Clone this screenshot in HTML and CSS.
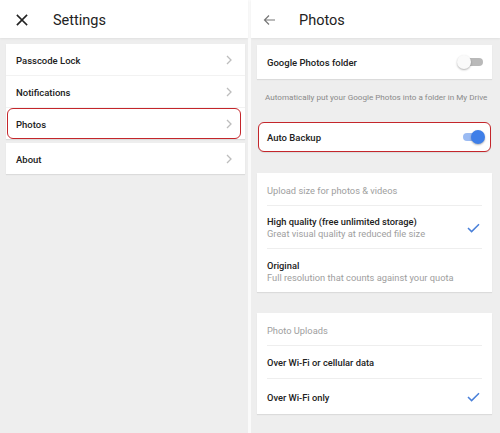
FILE: index.html
```html
<!DOCTYPE html>
<html>
<head>
<meta charset="utf-8">
<link rel="stylesheet" href="styles.css">
</head>
<body>
<div class="screens">
  <section class="panel left">
    <header class="bar">
      <svg class="icon-x" width="12" height="12" viewBox="0 0 12 12"><path d="M1.5 1.5 L10.5 10.5 M10.5 1.5 L1.5 10.5" stroke="#222" stroke-width="1.7" stroke-linecap="square"/></svg>
      <h1>Settings</h1>
    </header>
    <div class="content">
      <div class="card">
        <div class="nav-row"><span>Passcode Lock</span><svg class="chev" width="6" height="10" viewBox="0 0 6 10"><path d="M1 1 L5 5 L1 9" fill="none" stroke="#bdbdbd" stroke-width="1.3"/></svg></div>
        <div class="nav-row"><span>Notifications</span><svg class="chev" width="6" height="10" viewBox="0 0 6 10"><path d="M1 1 L5 5 L1 9" fill="none" stroke="#bdbdbd" stroke-width="1.3"/></svg></div>
        <div class="nav-row marked"><span>Photos</span><svg class="chev" width="6" height="10" viewBox="0 0 6 10"><path d="M1 1 L5 5 L1 9" fill="none" stroke="#bdbdbd" stroke-width="1.3"/></svg></div>
      </div>
      <div class="card">
        <div class="nav-row"><span>About</span><svg class="chev" width="6" height="10" viewBox="0 0 6 10"><path d="M1 1 L5 5 L1 9" fill="none" stroke="#bdbdbd" stroke-width="1.3"/></svg></div>
      </div>
    </div>
  </section>
  <div class="sep"></div>
  <section class="panel right">
    <header class="bar">
      <svg class="icon-back" width="13" height="12" viewBox="0 0 13 12"><path d="M12 6 H1.5 M6 1.5 L1.5 6 L6 10.5" fill="none" stroke="#777" stroke-width="1.2"/></svg>
      <h1>Photos</h1>
    </header>
    <div class="content rc">
      <div class="card">
        <div class="toggle-row"><span>Google Photos folder</span><span class="switch off"><span class="knob"></span></span></div>
      </div>
      <p class="desc">Automatically put your Google Photos into a folder in My Drive</p>
      <div class="card boxed">
        <div class="toggle-row"><span>Auto Backup</span><span class="switch on"><span class="knob"></span></span></div>
      </div>
      <div class="card group">
        <div class="group-head">Upload size for photos &amp; videos</div>
        <div class="opt tall">
          <div class="txt"><div class="t">High quality (free unlimited storage)</div><div class="s">Great visual quality at reduced file size</div></div>
          <svg class="check" width="13" height="10" viewBox="0 0 13 10"><path d="M1 5 L4.6 8.6 L12 1.2" fill="none" stroke="#4a80d9" stroke-width="1.5"/></svg>
        </div>
        <div class="opt tall">
          <div class="txt"><div class="t">Original</div><div class="s">Full resolution that counts against your quota</div></div>
        </div>
      </div>
      <div class="card group">
        <div class="group-head">Photo Uploads</div>
        <div class="opt"><div class="txt"><div class="t">Over Wi-Fi or cellular data</div></div></div>
        <div class="opt last">
          <div class="txt"><div class="t">Over Wi-Fi only</div></div>
          <svg class="check" width="13" height="10" viewBox="0 0 13 10"><path d="M1 5 L4.6 8.6 L12 1.2" fill="none" stroke="#4a80d9" stroke-width="1.5"/></svg>
        </div>
      </div>
    </div>
  </section>
</div>
</body>
</html>
```
FILE: styles.css
```css
* { box-sizing: border-box; }
html, body { margin: 0; padding: 0; }
body {
  width: 500px;
  height: 433px;
  overflow: hidden;
  background: #fff;
  font-family: Roboto, "Liberation Sans", sans-serif;
  color: #212121;
}
.screens { display: flex; height: 433px; }
.panel { display: flex; flex-direction: column; background: #eeeeee; }
.left { width: 248px; }
.sep { width: 3px; background: #fafafa; }
.right { flex: 1; }
.bar {
  height: 38px;
  padding-top: 2px;
  background: #fff;
  display: flex;
  align-items: center;
  box-shadow: 0 1px 2px rgba(0,0,0,0.06);
  position: relative;
  z-index: 1;
}
.bar h1 { margin: 0; font-size: 14.5px; font-weight: 400; color: #222; }
.left .bar { padding-left: 16px; }
.icon-x { margin-right: 25px; }
.right .bar { padding-left: 12px; }
.icon-back { margin-right: 23px; }
.content { flex: 1; padding: 6px 3px 0 6px; display: flex; flex-direction: column; gap: 4px; }
.card { background: #fff; box-shadow: 0 1px 1px rgba(0,0,0,0.08); }
.nav-row {
  height: 32px;
  display: flex;
  align-items: center;
  justify-content: space-between;
  padding: 1px 13px 0 10px;
  font-size: 9.5px;
  font-weight: 500;
  border-bottom: 1px solid #f2f2f2;
  position: relative;
}
.card .nav-row:last-child { border-bottom: none; height: 31px; }
.nav-row.marked::after {
  content: "";
  position: absolute;
  left: 1px; right: 4px; top: 0; bottom: 0;
  border: 1.5px solid #c4262b;
  border-radius: 6px;
}
.rc { padding: 7px 8px 0 6px; gap: 0; }
.toggle-row {
  height: 34px;
  display: flex;
  align-items: center;
  justify-content: space-between;
  padding: 0 9px 0 10px;
  font-size: 9.5px;
  font-weight: 500;
}
.desc {
  margin: 0;
  height: 43px;
  padding-top: 13px;
  padding-left: 8px;
  font-size: 8.1px;
  color: #8a8a8a;
  white-space: nowrap;
}
.boxed { border: 1.5px solid #c4262b; border-radius: 6px; margin: 0 1px; }
.boxed .toggle-row { height: 28px; padding: 0 6px 0 8px; }
.switch { position: relative; width: 24px; height: 14px; display: block; }
.switch::before {
  content: "";
  position: absolute;
  left: 3px; right: 0; top: 3px; height: 8px;
  border-radius: 4px;
}
.switch.off::before { background: #b9b9b9; }
.switch.on::before { background: #9bbbf3; }
.knob {
  position: absolute;
  top: 0; width: 14px; height: 14px; border-radius: 50%;
  box-shadow: 0 1px 2px rgba(0,0,0,0.3);
}
.off .knob { left: -2px; background: #fafafa; }
.on .knob { right: -1px; background: #3f7fe8; }
.group { margin-top: 21px; padding: 0 10px 0 10px; }
.group-head {
  height: 33px;
  display: flex;
  align-items: center;
  padding-top: 2px;
  font-size: 9.3px;
  color: #9e9e9e;
  border-bottom: 1px solid #eeeeee;
}
.opt {
  height: 33px;
  display: flex;
  align-items: center;
  justify-content: space-between;
  border-bottom: 1px solid #eeeeee;
  padding-right: 2px;
  padding-top: 1px;
}
.opt.tall { height: 43px; }
.card .opt:last-child { border-bottom: none; }
.opt.last { height: 35px; }
.t { font-size: 9.3px; font-weight: 500; color: #212121; }
.s { font-size: 9.3px; color: #9e9e9e; margin-top: 1px; }
.check { display: block; }
```
